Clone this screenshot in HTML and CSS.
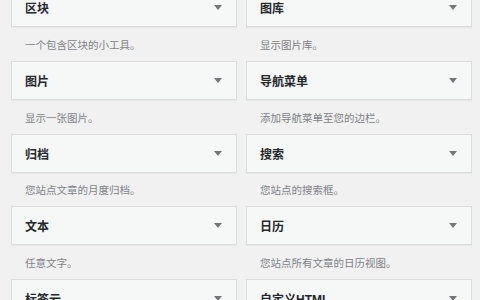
FILE: index.html
```html
<!DOCTYPE html>
<html>
<head>
  <title>小工具</title>
  <link rel="stylesheet" href="styles.css">
</head>
<body>
  <div id="widgets">
    <div class="widget">
      <div class="widget-top"><h3>区块</h3><span class="arrow"></span></div>
      <p class="widget-desc">一个包含区块的小工具。</p>
    </div>
    <div class="widget">
      <div class="widget-top"><h3>图库</h3><span class="arrow"></span></div>
      <p class="widget-desc">显示图片库。</p>
    </div>
    <div class="widget">
      <div class="widget-top"><h3>图片</h3><span class="arrow"></span></div>
      <p class="widget-desc">显示一张图片。</p>
    </div>
    <div class="widget">
      <div class="widget-top"><h3>导航菜单</h3><span class="arrow"></span></div>
      <p class="widget-desc">添加导航菜单至您的边栏。</p>
    </div>
    <div class="widget">
      <div class="widget-top"><h3>归档</h3><span class="arrow"></span></div>
      <p class="widget-desc">您站点文章的月度归档。</p>
    </div>
    <div class="widget">
      <div class="widget-top"><h3>搜索</h3><span class="arrow"></span></div>
      <p class="widget-desc">您站点的搜索框。</p>
    </div>
    <div class="widget">
      <div class="widget-top"><h3>文本</h3><span class="arrow"></span></div>
      <p class="widget-desc">任意文字。</p>
    </div>
    <div class="widget">
      <div class="widget-top"><h3>日历</h3><span class="arrow"></span></div>
      <p class="widget-desc">您站点所有文章的日历视图。</p>
    </div>
    <div class="widget">
      <div class="widget-top"><h3>标签云</h3><span class="arrow"></span></div>
      <p class="widget-desc">您最常用的标签的云。</p>
    </div>
    <div class="widget">
      <div class="widget-top"><h3>自定义HTML</h3><span class="arrow"></span></div>
      <p class="widget-desc">任意HTML代码。</p>
    </div>
  </div>
</body>
</html>
```

FILE: styles.css
```css
body {
  margin: 0;
  background-color: #f1f1f1;
  font-family: "Liberation Sans", "Noto Sans CJK SC", sans-serif;
  overflow: hidden;
}

#widgets {
  display: grid;
  grid-template-columns: 1fr 1fr;
  column-gap: 9px;
  padding: 0 8px 0 11px;
  margin-top: -11.6px;
}

.widget-top {
  display: flex;
  align-items: center;
  justify-content: space-between;
  height: 37px;
  padding: 0 14px 0 13px;
  background-color: #f6f7f7;
  border: 1px solid #dcdcdc;
  box-shadow: 0 1px 1px rgba(0, 0, 0, 0.04);
}

h3 {
  margin: 0;
  font-size: 12px;
  font-weight: bold;
  color: #23282d;
}

.arrow {
  width: 0;
  height: 0;
  border-left: 4px solid transparent;
  border-right: 4px solid transparent;
  border-top: 5px solid #72777c;
}

.widget-desc {
  display: flex;
  align-items: center;
  height: 33.6px;
  margin: 0;
  padding: 1px 14px 0;
  box-sizing: border-box;
  font-size: 10.5px;
  color: #7e8388;
}
```
